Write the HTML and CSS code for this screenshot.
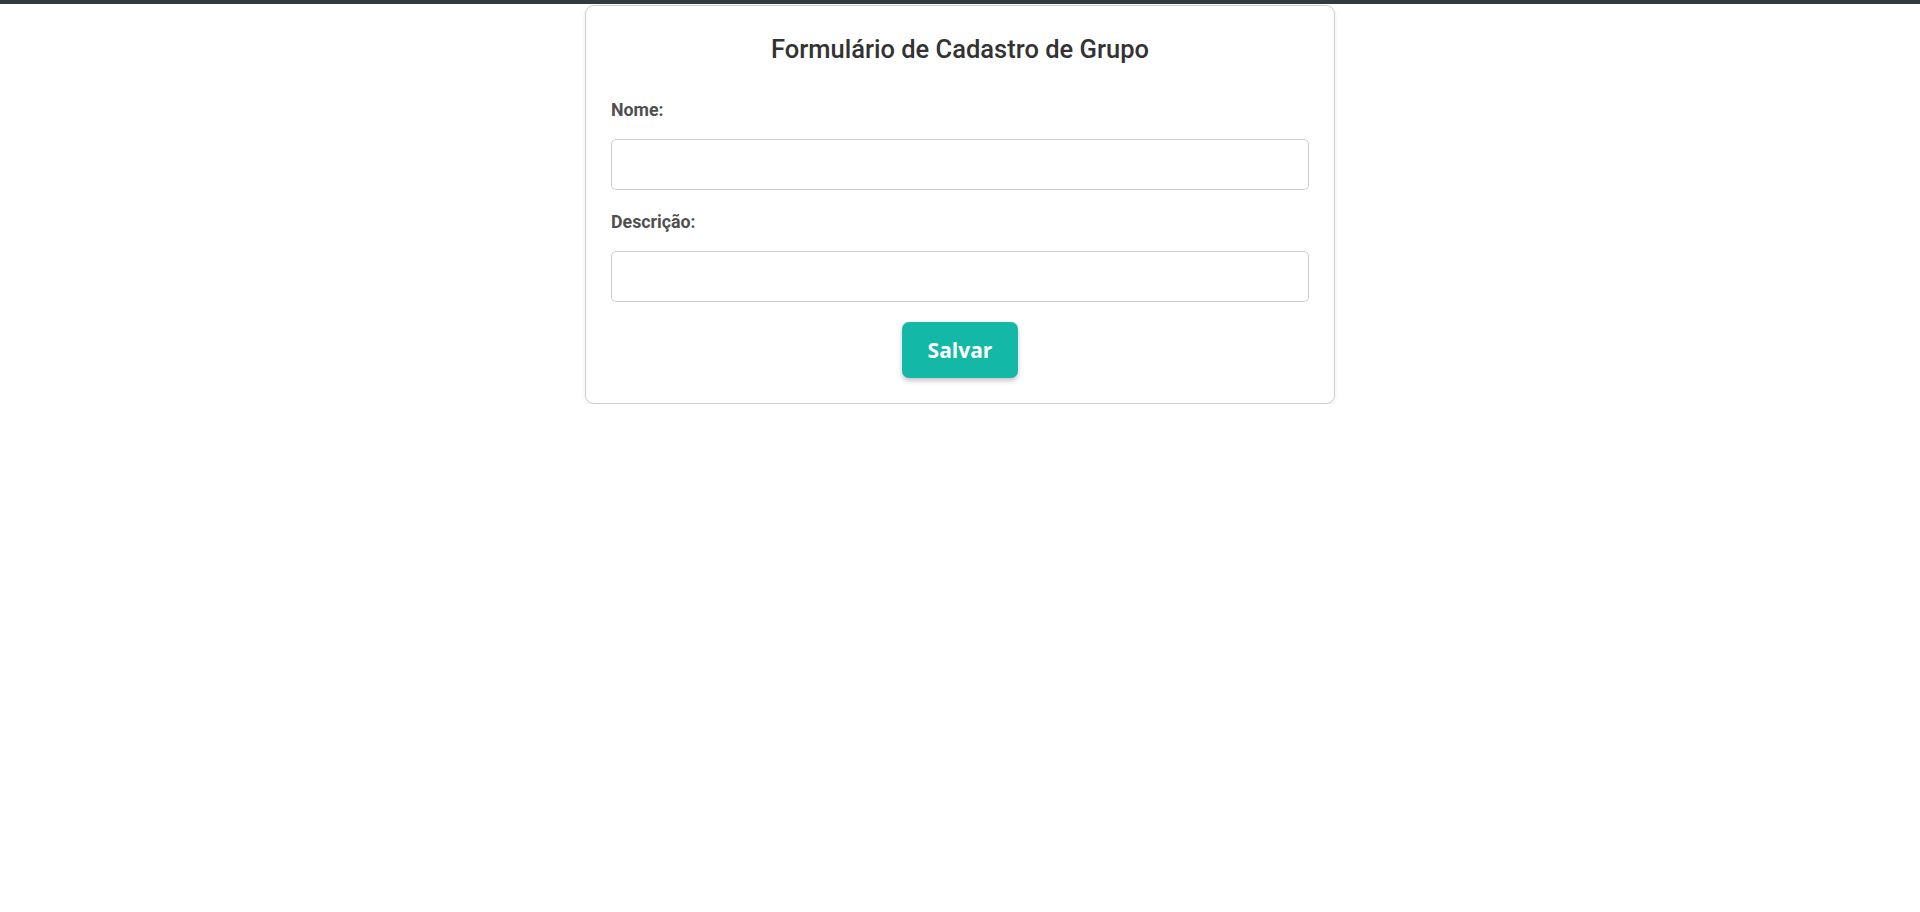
FILE: index.html
```html
<!DOCTYPE html>
<html lang="pt-BR">
<head>
<meta charset="utf-8">
<title>Cadastro de Grupo</title>
<link rel="stylesheet" href="styles.css">
</head>
<body>
<div class="topbar"></div>
<main class="page">
  <form class="card">
    <h2 class="title">Formulário de Cadastro de Grupo</h2>
    <label class="label" for="nome">Nome:</label>
    <input class="input" id="nome" type="text">
    <label class="label" for="descricao">Descrição:</label>
    <input class="input" id="descricao" type="text">
    <div class="actions">
      <button class="btn" type="button">Salvar</button>
    </div>
  </form>
</main>
</body>
</html>
```

FILE: styles.css
```css
* { box-sizing: border-box; }
html, body {
  margin: 0;
  padding: 0;
  background: #ffffff;
  font-family: Roboto, "Liberation Sans", Arial, sans-serif;
}
.topbar {
  height: 4px;
  background: #343a40;
}
.page {
  display: flex;
  justify-content: center;
  padding-top: 1px;
}
.card {
  width: 750px;
  border: 1px solid #cfcfcf;
  border-radius: 9px;
  box-shadow: 0 2px 5px rgba(0, 0, 0, 0.08);
  padding: 25px;
  display: flex;
  flex-direction: column;
  background: #fff;
}
.title {
  margin: 4px 0 35px;
  font-size: 25.5px;
  font-weight: 500;
  line-height: 29px;
  color: #333333;
  text-align: center;
}
.label {
  font-size: 17.8px;
  font-weight: 700;
  line-height: 21px;
  color: #505050;
  margin-bottom: 19px;
}
.input {
  height: 51px;
  width: 100%;
  border: 1px solid #cccccc;
  border-radius: 5px;
  margin: 0 0 21px;
  padding: 0 12px;
  font-size: 16px;
  font-family: inherit;
}
.input:last-of-type { margin-bottom: 20px; }
.actions {
  display: flex;
  justify-content: center;
}
.btn {
  height: 56px;
  padding: 0 26px;
  border: none;
  border-radius: 7px;
  background: #14b8a6;
  color: #ffffff;
  font-family: "Open Sans", Inter, sans-serif;
  font-size: 21px;
  font-weight: 700;
  box-shadow: 0 3px 5px rgba(0, 0, 0, 0.22);
  cursor: pointer;
}
```
